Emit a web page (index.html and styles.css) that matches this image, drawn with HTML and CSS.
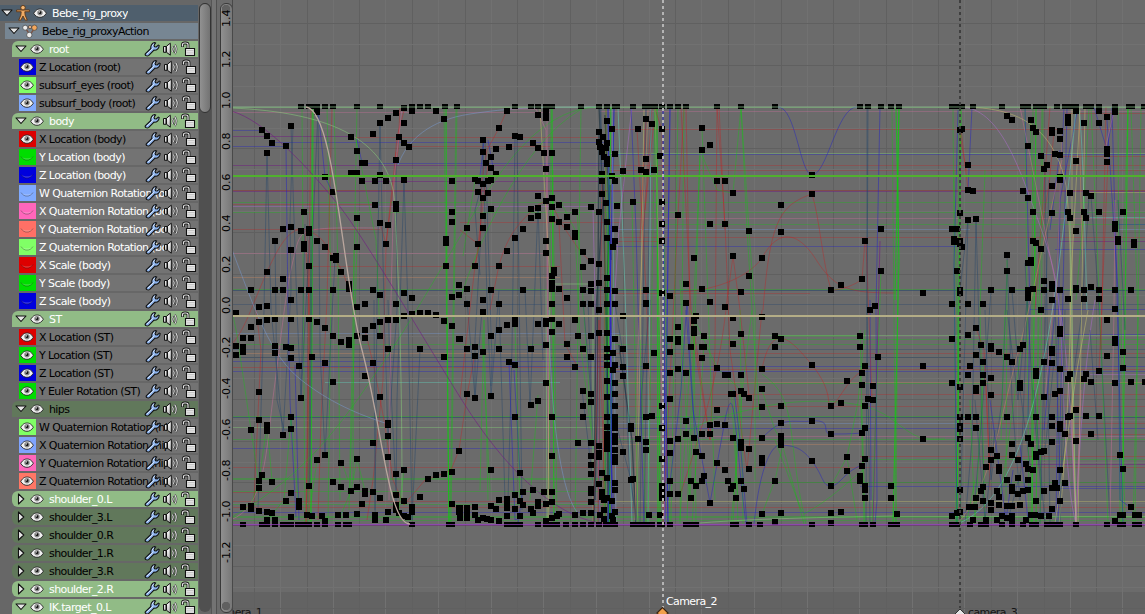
FILE: index.html
```html
<!DOCTYPE html>
<html lang="en">
<head>
<meta charset="utf-8">
<title>Graph Editor</title>
<link rel="stylesheet" href="styles.css">
</head>
<body>
<svg class="defs" width="0" height="0">
  <defs>
    <linearGradient id="metal" x1="0" x2="0" y1="0" y2="1"><stop offset="0" stop-color="#fff"/><stop offset="1" stop-color="#bbb"/></linearGradient>
    <symbol id="down" viewBox="0 0 12 8"><path d="M1 1h10L6 6.5z" fill="#e6e6e6" stroke="#111" stroke-width="1.1" stroke-linejoin="round"/></symbol>
    <symbol id="right" viewBox="0 0 8 12"><path d="M1.500 1v10L6.800 6z" fill="#e6e6e6" stroke="#111" stroke-width="1.1" stroke-linejoin="round"/></symbol>
    <symbol id="eye" viewBox="0 0 14 10"><path d="M.7 5.300C3 1.700 5 1 7 1s4.400.7 6.300 4.300C11.500 8.300 9.300 9.300 7 9.300S2.300 8.300.7 5.300z" fill="#f2f2f2" stroke="#222" stroke-width=".9"/><circle cx="7" cy="4.700" r="2.700" fill="#888"/><circle cx="7" cy="4.700" r="1.400" fill="#111"/><circle cx="6.300" cy="3.900" r=".7" fill="#fff"/></symbol>
    <symbol id="closed" viewBox="0 0 14 10"><path d="M1 4.500C4 9.500 10 9.500 13 4.500 10.500 6 9 6.300 7 6.300S3.500 6 1 4.500z" fill="#fff" fill-opacity=".2"/><path d="M1 4.500C4 9.300 10 9.300 13 4.500" fill="none" stroke="#000" stroke-opacity=".3"/></symbol>
    <symbol id="wrench" viewBox="0 0 16 16"><path d="M1.500 12.600 6.900 7.500C6.300 4.800 8 2 10.600 1.500l1 .4-1.600 2.300.6 1.500 1.700.3 2-1.900.9.500c-.1 2.800-2.500 5-5.200 4.500l-5.200 5.200c-1.800 1.500-4.600-.1-3.300-1.700z" fill="#8db4ee" stroke="#111" stroke-width="1.100"/><path d="m3 13 6.400-6.200M8.400 5.400c.1-1.300.7-2 1.500-2.500" fill="none" stroke="#dceaff" stroke-width="1"/></symbol>
    <symbol id="speaker" viewBox="0 0 16 16"><path d="M1 5.500h2.500v5.800H1zM4 5.200 7.800 2.200v12L4 11.300z" fill="url(#metal)" stroke="#111" stroke-width="1"/><path d="M10 5.500c1 1.700 1 3.800 0 5.500M12.200 3.600c2 3 2 6.400 0 9.300" fill="none" stroke="#222" stroke-width="2"/><path d="M10 5.500c1 1.700 1 3.800 0 5.500M12.200 3.600c2 3 2 6.400 0 9.300" fill="none" stroke="#e4e4e4" stroke-width="1.100"/></symbol>
    <symbol id="lock" viewBox="0 0 16 16"><path d="M1.500 6V3.700Q1.500 2 3.700 2h1.100Q7 2 7 3.700V8" fill="none" stroke="#181818" stroke-width="2.800"/><path d="M1.500 5.500V3.700Q1.500 2 3.700 2h1.100Q7 2 7 3.700V8" fill="none" stroke="#e4e4e4" stroke-width="1.200"/><path d="M4.500 7.500h9v7h-9z" fill="#eee" stroke="#111" stroke-width="1.100"/><path d="M5.500 9.500h7M5.500 11.200h7M5.500 13h7" stroke="#aaa" stroke-width=".6"/></symbol>
    <symbol id="figure" viewBox="1 .5 14 15"><path d="M2 5.200h12v1.600H9.700L10 10l2 4.700h-2L8 10.800 6 14.700H4L6 10l.3-3.200H2z" fill="#f0ac66" stroke="#5a3312" stroke-width=".8"/><circle cx="8" cy="3" r="2.100" fill="#f5b774" stroke="#5a3312" stroke-width=".8"/></symbol>
    <symbol id="action" viewBox="0 0 16 16"><path d="M3 4.500h10L8 12z" fill="none" stroke="#7b5548" stroke-width="1.400"/><g stroke="#444" stroke-width=".7"><circle cx="3.200" cy="4.700" r="2.500" fill="#ececec"/><circle cx="8" cy="4" r="1.700" fill="#ddb08c"/><circle cx="12.400" cy="4.700" r="2.700" fill="#f3a75d"/><circle cx="7.300" cy="12" r="2.700" fill="#ececec"/></g></symbol>
  </defs>
</svg>
<main class="editor">
  <aside class="channels">
    <div class="list" id="list"></div>
    <div class="scrollbar"><div class="thumb"></div></div>
  </aside>
  <div class="divider"></div>
  <div class="scale" id="scale"></div>
  <svg class="plot" id="plot" viewBox="232 0 913 614" width="913" height="614"></svg>
</main>
<script src="graph.js"></script>
</body>
</html>
```
FILE: styles.css
```css
body { margin: 0; width: 1145px; height: 614px; overflow: hidden; background: #6b6b6b; font-family: "DejaVu Sans", sans-serif; font-size: 11px; color: #000; }
.defs { position: absolute; }
.editor { display: flex; height: 614px; }
.channels { display: flex; width: 211px; background: #676767; }
.list { display: flex; flex-direction: column; gap: 2px; width: 198px; height: 609px; padding-top: 5px; overflow: hidden; }
.row { display: flex; align-items: center; flex: none; height: 16px; box-sizing: border-box; line-height: 16px; }
.icon { flex: none; display: block; }
.object { background: #4f5f6d; color: #fff; }
.object .name { margin-left: 5px; }
.action { margin-left: 5px; padding-left: 2px; background: #778693; }
.action .name { margin-left: 4px; }
.group { margin-left: 12px; padding-left: 2px; background: #61785b; border-top-left-radius: 6px; }
.group.shut { border-bottom-left-radius: 6px; }
.group.selected { background: #91bb86; }
.selected { color: #fff; }
.toggle { display: flex; justify-content: center; width: 13px; flex: none; }
.group .eye { margin-left: 3px; }
.group .name { margin-left: 5px; width: 95px; }
.object .figure { margin-left: 2px; }
.object .eye { margin-left: 2px; }
.action .mark { margin-left: 2px; }
.curve { margin-left: 19px; background: linear-gradient(90deg, transparent 17px, #737373 17px); }
.swatch { display: flex; align-items: center; padding-left: 1px; box-sizing: border-box; width: 17px; height: 16px; flex: none; }
.curve .name { margin-left: 3px; width: 129px; }
.name { white-space: nowrap; overflow: hidden; flex: none; letter-spacing: -0.6px; height: 16px; line-height: 17px; }
.tools { display: flex; gap: 2px; flex: none; }
.curve .tools { margin-left: -23px; }
.scrollbar { width: 12px; height: 609px; margin: 3px 0 0 1px; border-radius: 6px; background: #505050; }
.thumb { height: 108px; border: 1px solid #333; border-radius: 6px; background: linear-gradient(90deg, #919191, #737373); }
.divider { width: 4px; border-left: 1px solid #555; border-right: 1px solid #505050; background: #737373; margin-right: 3px; }
.scale { display: flex; flex-direction: column; width: 11px; height: 608px; margin-top: 3px; border: 1px solid #393939; border-radius: 6px; background: radial-gradient(circle at 5px 5px, #606060 4px, transparent 4.500px), radial-gradient(circle at 5px 602px, #606060 4px, transparent 4.500px), linear-gradient(90deg, #909090, #777); }
.tick { display: flex; align-items: center; justify-content: center; height: 41.070px; margin-left: 1px; writing-mode: vertical-rl; transform: rotate(180deg); line-height: 12px; flex: none; }
.tick:first-child { margin-top: -6px; }
.plot { display: block; margin-left: -1px; background: #6b6b6b; flex: none; }
.plot text { font-family: "DejaVu Sans", sans-serif; font-size: 11px; letter-spacing: -0.6px; }
.grid { stroke: #606060; fill: none; }
.half { stroke: #717171; fill: none; }
.curves { fill: none; stroke-width: 1; }
.flats { opacity: .78; }
.g { stroke: #08cf08; stroke-opacity: .36; }
.G { stroke: #00dc00; stroke-opacity: .6; stroke-width: 1.200; }
.r { stroke: #c91c1c; stroke-opacity: .36; }
.b { stroke: #2424c0; stroke-opacity: .48; }
.B { stroke: #1818d8; stroke-opacity: .65; stroke-width: 1.200; }
.n { stroke: #24466a; stroke-opacity: .46; }
.p { stroke: #702080; stroke-opacity: .65; }
.k { stroke: #d46fa0; stroke-opacity: .42; }
.o { stroke: #dc9160; stroke-opacity: .4; }
.l { stroke: #8cdf7c; stroke-opacity: .45; }
.s { stroke: #7aa0dd; stroke-opacity: .45; }
.t { stroke: #62d8c0; stroke-opacity: .48; }
.y { stroke: #c6c16c; stroke-opacity: .5; }
.v { stroke: #b06bd0; stroke-opacity: .5; }
.d { stroke: #1f3542; stroke-opacity: .7; stroke-width: 1.300; }
```
FILE: graph.js
```js
// Channel list: kind | name | flags or swatch colour
const rows = [
  ['group', 'root', 's'], ['c', 'Z Location (root)', '#0000dd'], ['c', 'subsurf_eyes (root)', '#80ff66'], ['c', 'subsurf_body (root)', '#80aaff'],
  ['group', 'body', 's'], ['c', 'X Location (body)', '#dd0000'], ['h', 'Y Location (body)', '#00dd00'], ['h', 'Z Location (body)', '#0000dd'],
  ['h', 'W Quaternion Rotation (body)', '#80aaff'], ['h', 'X Quaternion Rotation (body)', '#ff66bb'], ['h', 'Y Quaternion Rotation (body)', '#ff7066'], ['h', 'Z Quaternion Rotation (body)', '#80ff66'],
  ['h', 'X Scale (body)', '#dd0000'], ['h', 'Y Scale (body)', '#00dd00'], ['h', 'Z Scale (body)', '#0000dd'],
  ['group', 'ST', 's'], ['c', 'X Location (ST)', '#dd0000'], ['c', 'Y Location (ST)', '#00dd00'], ['c', 'Z Location (ST)', '#0000dd'], ['c', 'Y Euler Rotation (ST)', '#00dd00'],
  ['group', 'hips', ''], ['c', 'W Quaternion Rotation (hips)', '#80ff66'], ['c', 'X Quaternion Rotation (hips)', '#80a4ff'], ['c', 'Y Quaternion Rotation (hips)', '#ff66bb'], ['c', 'Z Quaternion Rotation (hips)', '#ff7766'],
  ['group', 'shoulder_0.L', 'sx'], ['group', 'shoulder_3.L', 'x'], ['group', 'shoulder_0.R', 'x'], ['group', 'shoulder_1.R', 'x'], ['group', 'shoulder_3.R', 'x'], ['group', 'shoulder_2.R', 'sx'], ['group', 'IK.target_0.L', 's']
];
const icon = (id, w, h, c = '') => `<svg class="icon ${c}" width="${w}" height="${h}"><use href="#${id}"/></svg>`;
const toggle = shut => `<span class="toggle">${shut ? icon('right', 8, 12) : icon('down', 12, 8)}</span>`;
const tools = `<span class="tools">${icon('wrench', 16, 16)}${icon('speaker', 17, 16)}${icon('lock', 16, 16)}</span>`;
let html = `<div class="row object">${toggle()}${icon('figure', 16, 16, 'figure')}${icon('eye', 14, 10, 'eye')}<span class="name">Bebe_rig_proxy</span></div>
<div class="row action">${toggle()}${icon('action', 16, 16, 'mark')}<span class="name">Bebe_rig_proxyAction</span></div>`;
for (const [kind, name, f] of rows) {
  if (kind === 'group') {
    html += `<div class="row group ${f.includes('s') ? 'selected' : ''} ${f.includes('x') ? 'shut' : ''}">${toggle(f.includes('x'))}${icon('eye', 14, 10, 'eye')}<span class="name">${name}</span>${tools}</div>`;
  } else {
    html += `<div class="row curve ${kind === 'h' ? 'selected' : ''}"><span class="swatch" style="background:${f}">${icon(kind === 'h' ? 'closed' : 'eye', 14, 10)}</span><span class="name">${name}</span>${tools}</div>`;
  }
}
document.getElementById('list').innerHTML = html;
document.getElementById('scale').innerHTML = ['1.4', '1.2', '1.0', '0.8', '0.6', '0.4', '0.2', '0.0', '-0.2', '-0.4', '-0.6', '-0.8', '-1.0', '-1.2'].map(t => `<span class="tick">${t}</span>`).join('');

// Keyframes, stored per tile at three units per pixel: [originX, originY, points]
const tiles = [
[230, 90, `213,51 236,51 246,51 261,51 261,66 285,51 309,51 381,51 450,51 522,54 546,51 570,51 594,51 645,51 681,51 546,62 618,62 498,69 474,84 450,99 522,99 642,87 429,132 183,108 96,120 111,138 126,159 168,168 111,189 363,141 507,141 522,159 537,171 381,183 396,219 405,219 498,209 285,261 309,306 363,250 381,250 450,255 396,273 435,273 468,273 522,270 666,273 435,345 498,342 498,357 222,366 666,366 381,384 666,396 450,399 474,406 711,414 159,417 183,411 213,424 237,418 237,430 135,453 261,453 285,471 222,463 222,477 381,471 183,480 468,462 648,447 648,459 309,504 318,498 318,510 237,528 648,528 111,546 333,546 159,567 357,583 357,597 687,585 711,597 63,600 135,600 159,600 213,600 237,600 309,600 429,600 450,615 522,609 687,615 666,621 546,624 183,630`],
[230, 300, `405,12 498,12 711,12 87,21 111,18 381,21 18,40 111,60 135,58 183,58 237,58 87,66 261,66 63,81 285,84 39,114 63,114 309,108 333,126 357,120 357,135 381,108 405,90 405,114 429,78 450,66 450,108 474,60 498,60 522,48 546,41 570,38 594,38 618,45 642,63 666,78 687,117 474,147 711,147 570,147 18,138 39,141 18,165 39,156 135,138 135,159 168,141 183,144 183,174 207,198 246,171 285,189 429,189 405,228 309,246 642,171 213,294 87,276 450,291 711,282 87,360 183,351 63,390 111,375 111,393 159,405 183,387 474,369 474,375 474,408 429,429 285,465 261,480 333,489 381,477 474,471 687,453 96,525 87,543 126,546 87,564 237,558 309,546 333,561 363,573 381,561 405,573 405,582 429,576 450,594 396,612 498,522 522,510 498,585 522,603 594,537 618,525 642,522 666,516 570,591 183,579 168,603 207,603 207,620 39,621 63,618 63,628 87,633 111,636 126,639 183,651 231,645 246,648 276,648 285,663 324,645 348,645 381,642 435,645 435,660 468,660 474,636 498,615 498,630 507,640 522,648 546,621 546,636 535,650 666,612 687,624 687,636 711,630 711,645 111,660 135,660 39,675 96,675 111,675 135,675 159,675 174,675 183,675 204,675 219,675 237,675 261,675 285,675 324,675 348,675 357,675 546,675 657,675 666,675`],
[460, 90, `165,51 213,51 234,51 258,51 276,51 363,51 417,51 441,51 465,51 471,51 519,51 555,51 570,51 585,51 606,51 630,51 654,51 678,51 141,62 234,75 258,66 258,84 117,114 441,93 69,150 165,138 180,141 219,159 147,171 108,177 69,186 234,174 252,189 276,189 78,219 93,201 93,234 108,252 258,237 45,267 54,273 69,282 84,272 93,270 54,306 84,309 69,324 93,357 234,318 258,333 276,324 276,351 276,387 297,345 234,354 213,357 234,378 213,384 297,397 321,381 321,411 345,366 345,428 345,442 393,351 417,366 417,126 429,142 417,155 441,160 420,172 438,175 426,186 432,200 441,208 441,222 456,117 465,192 426,252 426,273 426,312 456,258 465,273 489,243 471,348 519,336 438,340 441,396 465,417 441,444 465,453 459,471 534,117 558,87 576,102 606,117 600,198 558,207 543,240 558,246 582,240 606,336 606,402 606,453 654,375 702,504 678,582 630,618 606,610 558,600 558,640 69,378 69,414 21,414 54,462 189,417 165,444 141,483 117,528 45,528 258,453 258,489 369,486 369,531 393,513 417,522 282,540 282,550 276,558 393,582 417,579 441,565 441,600 465,603 276,580 276,597 297,597 369,600 393,603 21,597 93,600 189,600 321,624 69,630`],
[460, 300, `21,12 117,12 276,12 369,12 393,12 441,12 465,12 558,12 417,30 69,36 489,48 678,9 708,48 345,60 165,60 165,72 141,75 117,90 93,108 0,117 234,72 258,62 258,72 276,57 297,72 276,96 258,135 321,132 354,108 393,108 417,99 441,99 369,147 321,171 345,201 393,171 21,147 45,141 45,168 69,156 117,147 212,147 147,186 165,195 258,249 21,282 45,294 93,288 212,315 234,303 369,273 369,318 393,282 393,306 369,351 165,351 276,351 354,429 393,429 417,438 276,468 393,468 417,459 417,470 393,495 393,522 417,552 426,519 441,534 93,510 180,519 441,147 459,159 441,171 441,195 459,210 465,195 441,243 465,249 441,291 465,282 465,318 441,351 465,351 441,381 465,370 465,385 441,402 441,415 441,430 441,447 465,408 465,426 465,450 465,472 465,486 465,117 489,147 489,201 489,228 489,456 513,378 513,387 534,417 558,426 558,450 558,351 576,348 558,198 582,159 513,540 519,537 465,549 465,570 606,318 606,384 606,477 606,558 606,576 606,594 567,645 600,645 630,117 654,81 654,117 654,126 630,156 630,219 654,207 678,219 693,141 702,60 702,87 702,99 630,297 678,363 678,402 630,423 654,417 630,459 702,415 708,456 630,543 693,543 708,558 630,582 654,582 693,594 393,568 393,578 393,606 426,576 426,590 432,600 441,594 456,603 465,636 432,630 420,645 432,657 456,648 459,660 189,576 219,570 252,576 276,576 165,585 141,597 141,606 117,600 180,603 189,615 234,606 258,612 276,606 234,618 212,627 219,639 93,618 108,627 141,624 165,627 141,648 180,648 45,621 21,624 0,624 0,636 21,636 45,645 54,660 69,655 81,658 93,660 21,654 0,654 117,663 276,654 291,648 297,642 258,663 345,645 369,639 393,639 141,675 156,675 165,675 180,675 234,675 258,675 276,675 291,675 318,675 345,675 369,675 393,675 417,675 438,675 450,675 465,675 519,675 534,675 546,675 560,675 576,675 600,675 606,675 630,675 678,675 696,675 708,675`],
[680, 90, `18,51 111,51 183,51 285,51 540,51 564,51 603,51 633,51 657,51 66,114 66,180 90,165 111,273 135,273 159,309 396,255 396,312 303,345 90,402 135,402 303,426 207,423 42,504 159,498 246,504 207,558 18,582 66,597 183,606 90,636 18,639 453,600 483,585 546,567 555,453 603,417 603,543`],
[680, 300, `135,21 585,18 570,30 48,48 42,63 159,54 246,51 42,89 42,99 183,102 72,108 159,132 33,141 66,141 72,141 285,108 303,117 285,141 540,108 540,141 66,174 594,171 396,195 111,204 246,207 18,219 135,225 144,225 183,225 546,219 555,198 501,243 546,255 579,258 246,267 183,273 192,282 153,282 159,282 207,294 564,297 579,300 246,321 303,318 453,318 483,309 555,318 111,330 18,363 90,375 111,372 135,375 303,369 396,363 18,402 66,402 90,402 42,414 159,414 246,414 453,402 546,399 555,384 303,408 303,421 303,435 183,426 183,443 207,447 48,456 66,468 111,489 246,475 246,489 396,483 501,471 555,477 546,498 135,510 207,507 501,513 72,528 33,543 66,543 144,543 183,543 285,543 540,528 540,543 48,558 159,558 153,567 192,567 453,558 555,558 555,570 633,558 33,594 168,594 555,594 633,594 90,609 246,642 303,639 453,639 483,636 651,642 285,666 453,669 18,675 33,675 48,675 159,675 168,675 207,675 240,675 396,675 546,675 555,675 579,675 633,675 651,675`],
[905, 90, `141,51 156,51 171,51 204,51 291,51 354,51 369,51 393,51 405,51 417,51 456,51 480,51 495,51 513,51 543,51 558,51 582,51 630,51 672,51 681,51 717,51 513,62 582,63 630,66 606,81 306,78 321,90 378,90 489,81 489,99 537,99 582,99 384,114 393,126 441,120 441,130 465,123 465,147 165,120 171,117 369,168 408,198 450,192 465,196 606,178 606,192 606,216 513,213 426,225 417,236 189,225 465,261 465,271 441,288 189,300 204,303 354,303 369,324 495,309 543,309 558,318 165,369 189,390 213,387 384,366 441,369 489,366 495,384 537,366 543,384 582,366 654,366 630,402 630,416 513,423 141,417 156,417 147,447 147,456 165,453 165,463 171,471 384,453 393,459 408,477 639,447 639,456 687,455 687,464 306,495 369,519 378,510 378,520 156,543 306,543 417,573 441,583 441,597 558,591 54,610 165,600 165,610 258,600 321,600 369,600 384,597 417,600 465,600 513,594 513,600 537,600 582,600 630,600 678,600 369,618 369,624 441,630 489,627 537,627 582,627`],
[905, 300, `141,12 189,12 234,12 408,30 630,27 606,60 213,84 189,105 141,117 465,87 465,101 630,117 630,128 228,135 258,138 258,147 354,135 345,147 213,165 282,156 306,171 321,186 234,186 441,147 441,159 441,189 417,186 606,168 654,156 654,204 54,198 194,198 189,225 234,225 258,234 465,207 393,213 393,227 495,222 489,237 543,222 537,237 558,246 582,213 141,249 234,249 165,261 213,265 213,274 345,249 345,264 465,273 450,282 630,249 678,246 720,246 258,285 417,291 513,330 165,351 189,351 213,351 306,351 393,351 441,351 489,350 495,348 543,348 582,348 165,377 165,386 213,384 441,378 465,372 465,386 165,417 54,417 480,402 558,402 513,423 369,414 378,432 441,426 321,432 258,450 258,480 276,468 321,465 339,480 393,463 393,472 408,456 417,453 645,465 654,507 243,501 282,501 282,513 363,492 369,507 384,510 465,510 339,534 306,540 369,540 450,549 480,549 165,570 234,561 228,573 276,573 282,590 321,561 321,573 339,582 354,573 369,570 441,564 456,564 417,573 213,594 234,603 258,609 258,630 282,615 306,618 321,618 345,615 393,603 465,603 192,621 210,621 441,627 678,621 141,648 156,640 165,636 204,660 243,660 276,660 291,648 306,654 321,648 321,660 363,660 378,645 390,645 408,648 432,648 630,663 645,645 654,645 690,645 702,645 141,675 156,675 195,675 228,675 243,675 291,675 321,675 354,675 381,675 393,675 426,675 441,675 453,675 465,675 513,675 606,675 645,675 654,675 690,675 702,675`]
];

// Constant-value stretches: class, x1, x2, y
const flat = `l 232 1145 107;k 232 550 112;b 232 262 130;p 232 355 136;r 355 600 137;b 272 610 142;b 232 286 146;r 410 550 146;b 365 608 163;p 232 605 165;p 360 605 181;p 232 1145 191;r 232 1145 190;g 232 1145 202;r 232 375 204;v 232 590 206;g 232 1145 212;r 460 620 222;r 232 380 229;k 232 545 253;r 310 560 266;o 232 560 277;g 232 1145 289;n 232 1145 290;n 232 1145 290;n 232 1145 304;s 232 620 333;g 232 1145 344;n 232 1145 349;n 232 1145 357;o 232 610 353;b 232 610 361;b 300 610 366;r 232 610 367;b 232 1145 371;t 325 560 382;g 232 1145 416;n 232 1145 417;n 232 1145 417;l 232 610 427;g 232 1145 439;b 232 610 448;r 232 1145 467;g 232 610 478;g 232 610 479;g 232 610 491;r 232 300 492;r 232 610 501;g 232 610 504;r 232 1145 507;b 232 1145 512;g 232 1145 516;g 232 1145 517;g 232 1145 520;v 232 1145 524;p 232 1145 525;k 600 1145 111;r 610 1145 129;l 610 1145 153;b 610 1145 154;r 610 1145 165;r 610 1145 170;k 610 1145 218;g 660 1145 224;s 610 970 229;r 610 660 241;b 610 960 246;r 610 810 293;l 610 1145 335;g 700 1145 339;r 610 1145 353;b 610 1145 366;r 610 1145 369;o 610 1145 382;g 610 1145 383;r 610 1145 394;r 610 1145 406;s 610 960 423;b 610 1145 428;k 610 1145 436;o 610 1060 444;r 860 1145 456;g 860 1145 459;g 660 1145 482;b 860 1145 486;y 610 1145 501;r 1065 1145 113;r 1060 1145 156;y 1090 1145 192;t 1090 1145 217;b 1115 1145 224;s 1115 1145 229;p 1060 1145 241;b 1055 1145 249;b 1065 1145 334;v 1090 1145 374;r 1065 1145 434;p 1030 1145 464;b 1058 1145 488;b 1030 1145 309;r 620 1145 237;r 960 1145 423;l 895 1145 516`;

// Animated stretches: class, then path in page pixels
const paths = `g M302 107L305 524;g M312 107L310 345 308 524;g M327 107L331 290 328 524;g M334 107L338 270 340 500;G M313 107L311 524;g M357 107L352 370 349 510;g M358 210L350 490;g M354 250L353 480;g M444 107L449 524;G M446 107L447 310 449 524;g M456 107L452 390 450 524;g M457 107L451 524
r M332 107L327 300 321 420 318 520;r M311 107L306 524;r M309 240V520;r M256 310L261 350 254 500;r M231 345C245 330 250 310 267 272S295 224 311 232 325 247 335 260 343 275 353 300;k M230 520C266 508 266 450 274 390S286 290 292 265 298 235 309 231 350 228 380 228;r M305 231L310 320 306 524;r M400 108L398 150 386 244 383 380 373 480 367 520;r M380 223L386 244 396 152;r M365 330L374 367 384 420 393 480 404 505 425 480 445 473 451 470 459 450 467 395 475 354;r M405 107L397 137 395 159
n M267 153L264 310 258 510;n M267 153L271 310 283 435 291 290 290 220 293 126;n M291 126L297 310 301 398 310 230;n M318 109L312 250 310 485;n M318 109L320 350 325 455 335 257;n M380 123L377 300 375 520;n M380 123L384 305 388 440 397 310 396 160;n M404 180L397 400 396 505;n M404 180L408 310 412 520 420 350;n M275 240L277 400 284 430 290 430;n M388 300L390 370 396 490;b M286 146L288 310 290 400 296 517;b M318 109L325 177 333 193;b M295 365L299 520;n M374 300L375 510;b M357 139L362 163;n M311 230L309 486;n M305 224L301 398
g M231 305L237 335 251 430 260 490;g M267 425L259 480 250 508;g M267 425L272 480;g M291 417L284 500 270 517;g M291 417L299 510;g M342 463L348 480;g M357 459L351 491 340 517;g M317 460L309 517;g M357 459L365 491;g M404 470L398 517;g M380 336L376 240 356 140;k M402 108L394 180 391 300 389 500
l M231 108C330 112 395 140 395 210 398 270 402 350 402 500;s M231 247C255 310 270 355 300 379S360 415 388 424;s M398 165C407 140 430 120 470 114S530 107 600 107;g M230 518C310 475 350 410 378 370S440 270 470 220 540 107 600 107
n M483 140L480 250 475 340 475 398;n M483 140L487 300 491 396 499 290;n M515 136L512 350 508 500;n M517 136L520 360 522 510;n M467 300L475 398 482 310;n M538 206L534 310 530 405;n M538 206L543 360;n M499 300L505 500;n M525 290L530 404;n M480 275L475 210 483 180;n M485 140L492 360 491 386;b M484 140L479 185;b M488 140L494 173;b M509 362L515 520 522 517;b M514 370L520 473;b M522 495L518 524;r M460 397L464 360 475 266 480 240 482 180 487 150 499 128 507 110;r M475 267L481 230;r M460 230L478 244 488 165;r M499 266C508 230 525 218 538 205 545 200 552 200 560 222 570 235 577 250 591 262 595 300 599 490;r M490 310L499 265;k M507 109L536 109 546 130 549 524;k M547 107L549 524;y M540 109L550 280 548 524;g M551 107L549 524;G M552 107L554 524;g M553 170L557 524;g M581 107L575 524;g M577 212L583 300 593 450;g M460 300C475 250 520 145 580 110;g M484 320L480 490;g M484 320L488 500;g M515 325L520 500;g M538 395L530 500;g M463 256L475 180;g M560 200L575 230 580 340 591 430;g M490 490L482 330;s M549 310C550 410 560 490 577 512;l M546 290L547 524;l M553 284H593V524;v M593 207L600 524;r M559 223L565 344 577 366
d M599 107L603 200 596 310 594 524;d M599 135L597 420 595 500;n M600 107L608 250 605 524;n M601 107L599 524;d M603 180L607 360 610 524;d M610 185L607 300 608 524;n M583 300L591 394;n M588 300L593 443;n M582 390L595 500;d M605 115L611 260;B M614 109L610 300 612 524;G M611 107L608 300 610 524;B M608 107L612 400 608 524;r M599 320L593 524;r M599 320L606 524;r M602 180L598 524;r M606 107L603 524;b M606 370L615 524;g M606 107L604 524;g M614 250L609 524;g M608 173L605 524;s M612 109L616 524;n M615 304L624 360 630 480 638 524;d M619 345L632 440 636 524;n M615 420L631 480 636 524 641 400 650 300;t M618 107L625 290 632 524 644 524;v M632 107C626 160 622 200 618 240L610 380;b M631 107L636 230 644 524;n M651 110L644 524;n M646 107L640 524;t M651 107L648 524;r M637 129L646 290 650 400;o M648 110L638 350 635 520;y M644 110L637 524;g M632 200L638 524;g M640 340L646 524;g M655 107L648 524;G M655 107L659 300 660 524;G M657 107L658 524;r M646 118L640 240;r M654 121L643 230;r M652 107L645 210;r M655 109L662 130 663 250;B M670 107L666 400 668 524;B M663 107L665 524;k M655 107L665 524;g M678 107L671 524;r M684 107L678 215 663 524;r M686 107L690 320 710 440;g M700 150L690 500;g M684 107L680 524;g M664 235L670 524;b M687 300L681 390 668 500;b M687 300L695 440
r M680 292C720 290 750 275 762 258 780 225 800 235 815 258 835 290 850 293 895 293;r M763 310C770 220 780 205 812 194 820 220 822 260 831 290 838 291 856 285 862 279;b M778 107C796 107 800 175 812 175 827 175 837 107 857 107;r M681 107L691 310 710 440 715 350 717 107;r M717 107L725 224 730 350 747 470 762 310;r M719 107L725 230;r M680 495C705 420 720 370 727 300L733 256 740 310 749 395;g M700 156L694 300 680 520;g M702 128L708 300 715 500;g M702 155L717 190 733 193 741 107 749 230 755 310 755 480;g M741 107L747 230 754 340 760 420;g M740 310L743 524;g M734 390L738 524;g M740 390L733 524;g M694 330L687 520;g M694 330L696 524;g M704 345L692 524;g M680 280L690 500;g M690 310L717 368 742 391 752 310;g M742 391L735 480 731 524;g M731 390L738 500;g M762 407C725 415 700 420 680 439;g M775 336H860;g M762 407C790 400 860 395 890 418S920 439 945 439
r M762 369C772 320 790 338 812 365S826 406 831 406 850 375 862 372;b M762 438C785 415 790 423 812 421S820 434 831 434 850 434 862 433;b M754 524C760 465 772 444 781 445S800 445 812 461 822 486 831 486 845 470 863 465;b M746 524C735 440 735 370 725 420L710 503 693 410 686 310;b M747 524L740 440 734 390;g M762 390L775 430 781 440 804 524;g M775 440L802 512;g M762 514L775 480 784 440;g M804 514C830 500 850 480 863 470;g M831 486L847 457 857 520;g M847 457L858 402 865 330;g M762 374C800 400 785 435 806 524;l M700 523C760 518 850 517 895 516
n M868 107L866 524;n M867 107V310L870 524;b M880 107L876 310 877 500 875 524;p M880 241L873 524;b M870 300L871 500;r M866 241L872 400;r M862 279L865 241;g M881 271L872 524;g M861 400L864 524;g M860 330L865 524;g M892 107L896 524;G M896 107L899 260 893 524;g M899 107L896 524;G M899 107L895 300;g M953 107L956 524;g M959 107L957 524;G M961 107L957 524;g M954 170L961 524
b M958 110L954 265 957 524;b M972 107L968 190;r M961 129L968 190 973 190;r M959 129L966 170;n M968 220L960 524;n M976 220L972 440 965 524;n M976 220L984 500;n M960 290L968 220;n M991 291L983 400 975 500;n M1007 271L1002 400 991 480 985 310;n M1007 255L1012 400 1020 500;n M1028 290L1021 470 1007 524;n M1012 291L1020 390 1030 465;n M1025 263L1033 400 1042 500;n M1091 196L1098 290 1110 520;n M1089 196L1082 310 1060 480;n M1045 170L1050 524;n M1049 180L1040 524;n M1055 300L1060 490;g M1025 107L1028 400 1029 524;g M1033 107L1031 524;G M1036 107L1032 524;g M1030 120L1038 310 1036 524;g M1042 107L1036 524;g M1043 107L1040 524;b M1025 107L1030 310 1028 420;b M1064 107L1055 310 1044 430;b M1078 107L1060 200 1056 524;b M1060 150L1050 230;b M1067 107L1058 524;r M1054 132L1049 185 1043 220;r M1050 107L1035 310;k M1020 107L1055 280 1045 400;o M1062 140L1056 300;y M1080 110L1070 300 1076 524;y M1085 107L1078 524;y M1072 107V430L1076 524;o M1079 107L1082 250;y M960 107C1010 107 1050 120 1065 180 1075 240 1070 420 1059 524;t M957 524C1020 500 1045 380 1062 240S1074 107 1078 107 1085 240 1087 310;v M960 107C1000 107 1020 170 1038 220S1060 290 1062 360 1069 500 1076 524;o M957 524C990 490 1000 420 1016 360S1035 280 1062 160;v M1060 310C1070 370 1072 450 1076 524 1080 430 1085 360 1095 300;y M1055 524L1077 370 1088 310;k M1072 420L1076 524 1081 390;l M1076 524L1070 220;g M1089 107L1083 220 1076 300;g M1091 107L1097 240 1108 524;g M1128 107L1121 320 1125 524;G M1128 107L1122 524;g M1131 107L1138 320 1133 524;g M1141 107L1135 524;g M1118 107L1120 524;b M1112 107L1123 524;b M1107 120L1118 290 1120 500 1130 507;b M1094 107L1107 150 1114 107;r M1101 350L1106 107;r M1099 371L1108 160;k M1114 111L1105 150;k M1110 520L1114 310 1115 200;n M1125 330L1118 200;n M1090 330L1098 440;g M985 170L980 310 985 524;g M1007 260L1006 500;g M970 400L975 524 984 360;g M975 480L967 520;b M1013 470L1006 520 990 400;b M1020 445L1028 520;r M975 325L984 350 990 470;r M986 385L990 490;g M1021 350L1000 500;g M1005 310L1001 440;n M1007 310L1018 400 1027 300;n M995 430L985 520 975 400;n M1034 390L1045 524;n M1065 310L1060 524;n M1045 451L1055 350`;

const grid = [];
for (let i = 0; i < 18; i++) {
  grid.push(`<path class="half" d="M${280.5 + Math.round(i * 52.65)} 0V614"/>`);
  grid.push(`<path class="grid" d="M${254.5 + Math.round(i * 52.65)} 0V614"/>`);
}
for (let i = 0; i < 15; i++) {
  grid.push(`<path class="half" d="M232 ${44.5 + Math.round(i * 41.75)}H1145"/>`);
  grid.push(`<path class="grid" d="M232 ${23.5 + Math.round(i * 41.75)}H1145"/>`);
}
const lines = flat.split(';').map(s => {
  const [c, a, b, y] = s.trim().split(' ');
  return `<path class="${c}" d="M${a} ${+y + 0.5}H${b}"/>`;
}).join('');
const shapes = paths.split(/[;\n]/).map(s => s.trim()).filter(Boolean).map(s => `<path class="${s[0]}" d="${s.slice(2)}"/>`).join('');
let keys = '';
for (const [ox, oy, pts] of tiles) {
  for (const p of pts.split(' ')) {
    const [x, y] = p.split(',').map(Number);
    const edge = (oy === 90 && y === 51) || (oy === 300 && y === 675);
    keys += `M${ox + Math.round(x / 3) - 3} ${oy + Math.round(y / 3) - 3}h6v${edge ? 5 : 6}h-6z`;
  }
}
document.getElementById('plot').innerHTML = `<rect x="232" y="592" width="913" height="22" fill="#636363"/>${grid.join('')}
<g class="curves"><g class="flats">${lines}</g>${shapes}
<path d="M231 111C265 120 310 170 337 203S430 350 465 405 550 517 605 524" class="p"/></g>
<path d="${keys}" fill="#000" shape-rendering="crispEdges"/>
<path d="M232 107H1145" stroke="#8fc090" stroke-opacity=".75"/>
<path d="M232 524.500H1145" stroke="#9040b8" stroke-opacity=".75"/>
<path d="M232 176H1145" stroke="#50b02e" stroke-width="2"/>
<path d="M232 316H1145" stroke="#b4ad86" stroke-width="2"/>
<path d="M306 107C335 110 342 275 362 350S388 524 410 524" fill="none" stroke="#b9a69d" stroke-width="1.300"/>
<path d="M663 0V608" stroke="#b4b4b4" stroke-width="2" stroke-dasharray="3"/>
<path d="M960 0V608" stroke="#3f3f3f" stroke-width="2" stroke-dasharray="3"/>
<path d="M657 613L662.500 607.500 668 613 662.500 618.500z" fill="#f2a04c" stroke="#3c2410" stroke-width="1.200"/>
<path d="M955 614L960 609 965 614 960 619z" fill="#e4e4e4" stroke="#333"/>
<text x="666" y="605" fill="#fff">Camera_2</text>
<text x="968" y="616" fill="#151515">camera_3</text>
<text x="213" y="616" fill="#151515">camera_1</text>
<path d="M232.500 0V614" stroke="#494949"/>`;
```
